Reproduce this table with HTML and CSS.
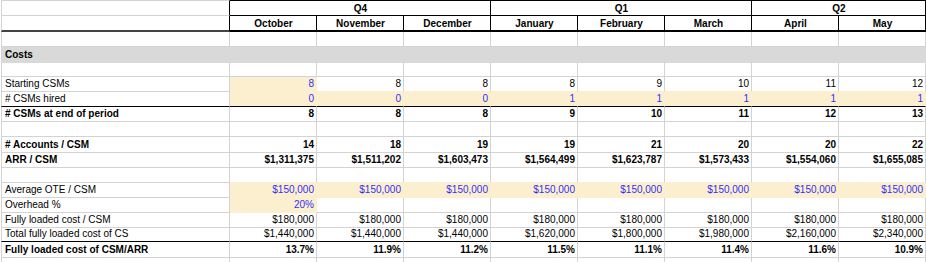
FILE: index.html
```html
<!DOCTYPE html>
<html>
<head>
<meta charset="utf-8">
<link rel="stylesheet" href="styles.css">
</head>
<body>
<div class="sheet">
  <div class="row h16 top">
    <div class="c lbl hl"></div>
    <div class="c q s3">Q4</div>
    <div class="c q s3">Q1</div>
    <div class="c q s2">Q2</div>
  </div>
  <div class="row h16">
    <div class="c lbl hl hb"></div>
    <div class="c m">October</div>
    <div class="c m">November</div>
    <div class="c m">December</div>
    <div class="c m">January</div>
    <div class="c m">February</div>
    <div class="c m">March</div>
    <div class="c m">April</div>
    <div class="c m">May</div>
  </div>
  <div class="row h15">
    <div class="c lbl"></div><div class="c"></div><div class="c"></div><div class="c"></div><div class="c"></div><div class="c"></div><div class="c"></div><div class="c"></div><div class="c"></div>
  </div>
  <div class="row h16 band b">
    <div class="c lbl">Costs</div><div class="c"></div><div class="c"></div><div class="c"></div><div class="c"></div><div class="c"></div><div class="c"></div><div class="c"></div><div class="c"></div>
  </div>
  <div class="row h14">
    <div class="c lbl"></div><div class="c"></div><div class="c"></div><div class="c"></div><div class="c"></div><div class="c"></div><div class="c"></div><div class="c"></div><div class="c"></div>
  </div>
  <div class="row h15">
    <div class="c lbl">Starting CSMs</div>
    <div class="c n y blue">8</div>
    <div class="c n ay">8</div>
    <div class="c n ay">8</div>
    <div class="c n ay">8</div>
    <div class="c n ay">9</div>
    <div class="c n ay">10</div>
    <div class="c n ay">11</div>
    <div class="c n ay">12</div>
  </div>
  <div class="row h15 bk">
    <div class="c lbl"># CSMs hired</div>
    <div class="c n y blue">0</div>
    <div class="c n y blue">0</div>
    <div class="c n y blue">0</div>
    <div class="c n y blue">1</div>
    <div class="c n y blue">1</div>
    <div class="c n y blue">1</div>
    <div class="c n y blue">1</div>
    <div class="c n y blue">1</div>
  </div>
  <div class="row h15 b">
    <div class="c lbl"># CSMs at end of period</div>
    <div class="c n">8</div>
    <div class="c n">8</div>
    <div class="c n">8</div>
    <div class="c n">9</div>
    <div class="c n">10</div>
    <div class="c n">11</div>
    <div class="c n">12</div>
    <div class="c n">13</div>
  </div>
  <div class="row h15">
    <div class="c lbl"></div><div class="c"></div><div class="c"></div><div class="c"></div><div class="c"></div><div class="c"></div><div class="c"></div><div class="c"></div><div class="c"></div>
  </div>
  <div class="row h16 b">
    <div class="c lbl"># Accounts / CSM</div>
    <div class="c n">14</div>
    <div class="c n">18</div>
    <div class="c n">19</div>
    <div class="c n">19</div>
    <div class="c n">21</div>
    <div class="c n">20</div>
    <div class="c n">20</div>
    <div class="c n">22</div>
  </div>
  <div class="row h15 b">
    <div class="c lbl">ARR / CSM</div>
    <div class="c n">$1,311,375</div>
    <div class="c n">$1,511,202</div>
    <div class="c n">$1,603,473</div>
    <div class="c n">$1,564,499</div>
    <div class="c n">$1,623,787</div>
    <div class="c n">$1,573,433</div>
    <div class="c n">$1,554,060</div>
    <div class="c n">$1,655,085</div>
  </div>
  <div class="row h15">
    <div class="c lbl"></div><div class="c ay"></div><div class="c ay"></div><div class="c ay"></div><div class="c ay"></div><div class="c ay"></div><div class="c ay"></div><div class="c ay"></div><div class="c ay"></div>
  </div>
  <div class="row h15">
    <div class="c lbl">Average OTE / CSM</div>
    <div class="c n y blue">$150,000</div>
    <div class="c n y blue">$150,000</div>
    <div class="c n y blue">$150,000</div>
    <div class="c n y blue">$150,000</div>
    <div class="c n y blue">$150,000</div>
    <div class="c n y blue">$150,000</div>
    <div class="c n y blue">$150,000</div>
    <div class="c n y blue">$150,000</div>
  </div>
  <div class="row h15">
    <div class="c lbl">Overhead %</div>
    <div class="c n y blue">20%</div>
    <div class="c n"></div>
    <div class="c n"></div>
    <div class="c n"></div>
    <div class="c n"></div>
    <div class="c n"></div>
    <div class="c n"></div>
    <div class="c n"></div>
  </div>
  <div class="row h15">
    <div class="c lbl">Fully loaded cost / CSM</div>
    <div class="c n">$180,000</div>
    <div class="c n">$180,000</div>
    <div class="c n">$180,000</div>
    <div class="c n">$180,000</div>
    <div class="c n">$180,000</div>
    <div class="c n">$180,000</div>
    <div class="c n">$180,000</div>
    <div class="c n">$180,000</div>
  </div>
  <div class="row h14 bk">
    <div class="c lbl">Total fully loaded cost of CS</div>
    <div class="c n">$1,440,000</div>
    <div class="c n">$1,440,000</div>
    <div class="c n">$1,440,000</div>
    <div class="c n">$1,620,000</div>
    <div class="c n">$1,800,000</div>
    <div class="c n">$1,980,000</div>
    <div class="c n">$2,160,000</div>
    <div class="c n">$2,340,000</div>
  </div>
  <div class="row h16 b">
    <div class="c lbl">Fully loaded cost of CSM/ARR</div>
    <div class="c n">13.7%</div>
    <div class="c n">11.9%</div>
    <div class="c n">11.2%</div>
    <div class="c n">11.5%</div>
    <div class="c n">11.1%</div>
    <div class="c n">11.4%</div>
    <div class="c n">11.6%</div>
    <div class="c n">10.9%</div>
  </div>
  <div class="row h15">
    <div class="c lbl"></div><div class="c"></div><div class="c"></div><div class="c"></div><div class="c"></div><div class="c"></div><div class="c"></div><div class="c"></div><div class="c"></div>
  </div>
</div>
</body>
</html>
```
FILE: styles.css
```css
html, body {
  margin: 0;
  padding: 0;
  background: #ffffff;
}
body {
  width: 926px;
  height: 262px;
  overflow: hidden;
  font-family: "Liberation Sans", Arial, sans-serif;
  font-size: 10px;
  color: #000;
}
.sheet {
  padding-left: 1px;
}
.row {
  display: grid;
  grid-template-columns: 229px repeat(8, 87px);
}
.h14 { height: 14px; }
.h15 { height: 15px; }
.h16 { height: 16px; }
.c {
  box-sizing: border-box;
  border-right: 1px solid #d3d3d3;
  border-bottom: 1px solid #d3d3d3;
  display: flex;
  align-items: flex-end;
  padding: 0 2px 1px 3px;
  line-height: 12px;
  white-space: nowrap;
  overflow: hidden;
}
.lbl {
  border-left: 1px solid #d3d3d3;
}
.n {
  justify-content: flex-end;
}
.b .c {
  font-weight: bold;
}
.blue {
  color: #3030f8;
}
.y {
  background: #fcefcf;
  border-right-color: #fcefcf;
  border-bottom-color: #fcefcf;
}
.ay {
  border-bottom-color: #fcefcf;
}
.bk .c {
  border-bottom-color: #000;
}
.band .c {
  background: #d9d9d9;
  border-right-color: #d9d9d9;
  border-bottom-color: #d9d9d9;
}
.top .c {
  border-top: 1px solid #d3d3d3;
}
.top .q {
  border-top-color: #000;
}
.hl {
  border-right-color: #000;
}
.hb {
  border-bottom: 2px solid #444;
}
.q {
  justify-content: center;
  font-weight: bold;
  border-right-color: #000;
  border-bottom-color: #000;
  padding-bottom: 0;
}
.s3 { grid-column: span 3; }
.s2 { grid-column: span 2; }
.m {
  justify-content: center;
  font-weight: bold;
  border-right-color: #000;
  border-bottom: 2px solid #000;
  padding-bottom: 0;
}
```
